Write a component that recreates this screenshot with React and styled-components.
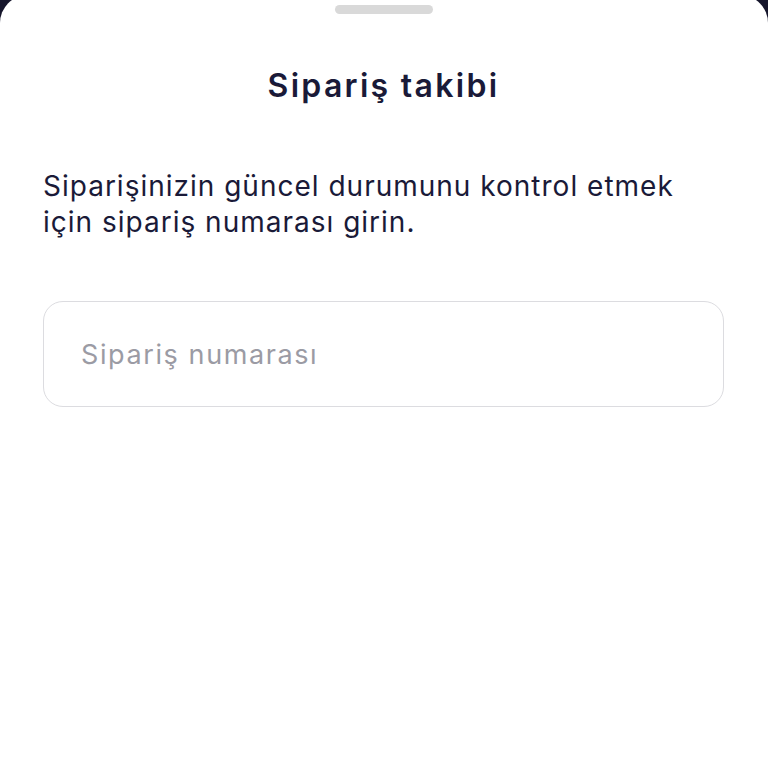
import React from 'react';
import styled, { createGlobalStyle } from 'styled-components';

const GlobalStyle = createGlobalStyle`
  html, body {
    margin: 0;
    padding: 0;
    background: #15152b;
    height: 100%;
    overflow: hidden;
  }

  #root {
    height: 100%;
  }
`;

export default function App() {
  return (
    <>
      <GlobalStyle />
      <Sheet>
        <Handle />
        <Title>Sipariş takibi</Title>
        <Description>
          Siparişinizin güncel durumunu kontrol etmek
          <br />
          için sipariş numarası girin.
        </Description>
        <OrderInput type="text" placeholder="Sipariş numarası" />
      </Sheet>
    </>
  );
}

const Sheet = styled.div`
  box-sizing: border-box;
  display: flex;
  flex-direction: column;
  margin-top: -5px;
  height: calc(100% + 5px);
  padding: 10px 44px 0 43px;
  background: #ffffff;
  border-radius: 28px 28px 0 0;
  font-family: Inter, 'Noto Sans', sans-serif;
  color: #1a1a38;
`;

const Handle = styled.div`
  align-self: center;
  width: 98px;
  height: 9px;
  border-radius: 5px;
  background: #d9d9d9;
`;

const Title = styled.h1`
  margin: 52px 0 0;
  text-align: center;
  font-size: 32px;
  font-weight: 600;
  line-height: 40px;
  letter-spacing: 2.3px;
`;

const Description = styled.p`
  margin: 62px 0 0;
  font-size: 28px;
  font-weight: 400;
  line-height: 36px;
  letter-spacing: 1px;
  white-space: nowrap;
`;

const OrderInput = styled.input`
  box-sizing: border-box;
  margin-top: 61px;
  width: 100%;
  height: 106px;
  padding: 0 37px;
  border: 1px solid #dcdce0;
  border-radius: 20px;
  outline: none;
  background: #ffffff;
  font-family: inherit;
  font-size: 27px;
  letter-spacing: 1.6px;
  color: #1a1a38;

  &::placeholder {
    color: #9b9ba4;
  }
`;
